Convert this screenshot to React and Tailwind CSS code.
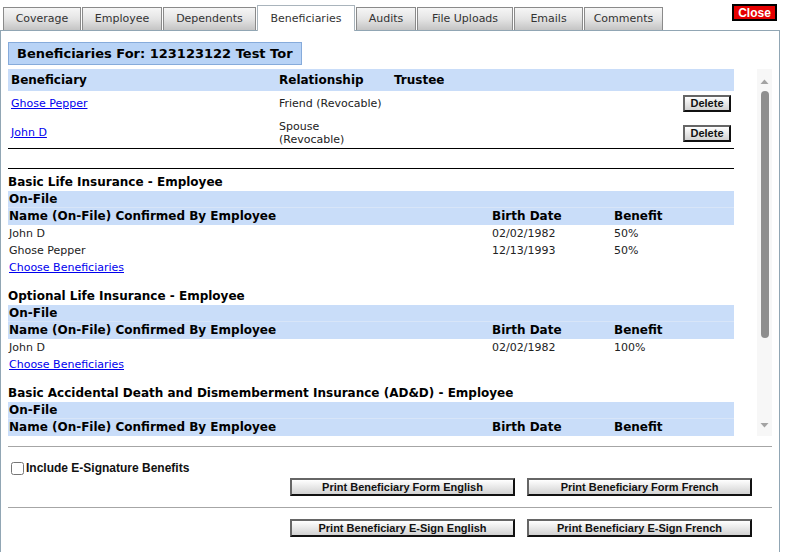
import React from 'react'

const tabs = [
  { label: 'Coverage', w: 'w-[78px]' },
  { label: 'Employee', w: 'w-[80px]' },
  { label: 'Dependents', w: 'w-[93px]' },
  { label: 'Beneficiaries', w: 'w-[98px]', active: true },
  { label: 'Audits', w: 'w-[60px]' },
  { label: 'File Uploads', w: 'w-[96px]' },
  { label: 'Emails', w: 'w-[69px]' },
  { label: 'Comments', w: 'w-[79px]' },
]

const sections = [
  {
    title: 'Basic Life Insurance - Employee',
    rows: [
      ['John D', '02/02/1982', '50%'],
      ['Ghose Pepper', '12/13/1993', '50%'],
    ],
  },
  {
    title: 'Optional Life Insurance - Employee',
    rows: [['John D', '02/02/1982', '100%']],
  },
  {
    title: 'Basic Accidental Death and Dismemberment Insurance (AD&D) - Employee',
    rows: [['John D', '02/02/1982', '100%']],
  },
]

function GrayButton({ children, className = '' }) {
  return (
    <button
      className={`border-2 border-t-[#666] border-l-[#666] border-r-[#111] border-b-[#111] bg-gradient-to-b from-white to-[#d2d2d2] font-['Liberation_Sans',Arial,sans-serif] text-[11px] font-bold leading-none text-[#111] ${className}`}
    >
      {children}
    </button>
  )
}

function Section({ section }) {
  return (
    <div className="mb-[11px]">
      <div className="h-[18px] text-[12px] font-bold leading-[18px] text-black">{section.title}</div>
      <div className="h-[17px] bg-[#c9ddf9] pl-[1px] text-[12px] font-bold leading-[17px] text-black border-b border-[#d8e5f8]">On-File</div>
      <div className="flex h-[17px] bg-[#c9ddf9] pl-[1px] text-[12px] font-bold leading-[17px] text-black">
        <div className="w-[483px]">Name (On-File) Confirmed By Employee</div>
        <div className="w-[122px]">Birth Date</div>
        <div>Benefit</div>
      </div>
      {section.rows.map((r) => (
        <div key={r[0]} className="flex h-[17px] pl-[1px] text-[11px] leading-[17px] text-[#222]">
          <div className="w-[483px]">{r[0]}</div>
          <div className="w-[122px]">{r[1]}</div>
          <div>{r[2]}</div>
        </div>
      ))}
      <a href="#" className="block h-[17px] pl-[1px] text-[11px] leading-[17px] text-[#0000ee] underline">
        Choose Beneficiaries
      </a>
    </div>
  )
}

export default function App() {
  return (
    <div className="h-[552px] w-[785px] overflow-hidden bg-white font-['DejaVu_Sans',Verdana,sans-serif]">
      {/* Tabs */}
      <div className="flex h-[31px] items-end pl-[3px] pr-[8px]">
        {tabs.map((t) =>
          t.active ? (
            <div
              key={t.label}
              className={`${t.w} relative z-10 mr-[1px] flex h-[26px] items-center justify-center border border-b-0 border-[#a9b4bc] bg-white pt-[1px] text-[11px] text-[#333]`}
            >
              {t.label}
            </div>
          ) : (
            <div
              key={t.label}
              className={`${t.w} mr-[1px] flex h-[24px] items-center justify-center border border-[#8a8a8a] bg-gradient-to-b from-[#f6f6f6] via-[#e4e4e4] to-[#c4c4c4] pt-[1px] text-[11px] text-[#333]`}
            >
              {t.label}
            </div>
          )
        )}
        <button className="mb-auto ml-auto mt-[4px] h-[17px] w-[45px] border-2 border-black bg-[#e60000] font-['Liberation_Sans',Arial,sans-serif] text-[12px] font-bold leading-none text-white">
          Close
        </button>
      </div>

      {/* Panel */}
      <div className="relative -mt-[1px] mr-[5px] h-[600px] border border-[#91a6b4] px-[7px] pt-[10px]">
        <div className="inline-block h-[23px] border border-[#86abdb] bg-[#b8d3f6] px-[8px] text-[13px] font-bold leading-[21px] text-black">
          Beneficiaries For: 123123122 Test Tor
        </div>

        <div className="mt-[4px] flex h-[367px]">
          {/* Scrollable content */}
          <div className="w-[749px] overflow-hidden">
            <div className="w-[726px]">
              <div className="flex h-[22px] items-center bg-[#c9ddf9] pb-[1px] text-[12px] font-bold text-black">
                <div className="w-[271px] pl-[3px]">Beneficiary</div>
                <div className="w-[115px]">Relationship</div>
                <div>Trustee</div>
              </div>
              <div className="flex h-[27px] items-center text-[11px]">
                <div className="w-[271px] pl-[3px]">
                  <a href="#" className="text-[#0000ee] underline">Ghose Pepper</a>
                </div>
                <div className="w-[130px] text-[#222]">Friend (Revocable)</div>
                <div className="flex-1" />
                <GrayButton className="mb-[3px] mr-[3px] h-[17px] w-[48px]">Delete</GrayButton>
              </div>
              <div className="flex h-[31px] items-center border-b border-black text-[11px]">
                <div className="w-[271px] pl-[3px]">
                  <a href="#" className="text-[#0000ee] underline">John D</a>
                </div>
                <div className="w-[80px] leading-[13px] text-[#222]">Spouse (Revocable)</div>
                <div className="flex-1" />
                <GrayButton className="mr-[3px] h-[17px] w-[48px]">Delete</GrayButton>
              </div>
              <div className="mt-[19px] border-t border-black pt-[4px]">
                {sections.map((s) => (
                  <Section key={s.title} section={s} />
                ))}
              </div>
            </div>
          </div>

          {/* Scrollbar */}
          <div className="flex w-[15px] flex-col items-center bg-[#f7f7f7]">
            <svg width="15" height="22" viewBox="0 0 15 22" className="shrink-0">
              <polygon points="3.5,15 11.5,15 7.5,10.5" fill="#a3a3a3" />
            </svg>
            <div className="h-[247px] w-[8px] rounded-[4px] bg-[#8e8e8e]" />
            <div className="flex-1" />
            <svg width="15" height="18" viewBox="0 0 15 18" className="shrink-0">
              <polygon points="3.5,5 11.5,5 7.5,9.5" fill="#a3a3a3" />
            </svg>
          </div>
        </div>

        {/* Footer */}
        <div className="mt-[10px] border-t border-[#a6a6a6] pt-[14px]">
          <label className="flex items-center gap-[2px] pl-[3px] font-['Liberation_Sans',Arial,sans-serif] text-[12px] font-bold leading-[14px] text-[#111]">
            <input type="checkbox" className="m-0 h-[13px] w-[13px]" />
            Include E-Signature Benefits
          </label>
          <div className="mt-[3px] flex justify-end gap-[12px] pr-[20px]">
            <GrayButton className="h-[18px] w-[225px]">Print Beneficiary Form English</GrayButton>
            <GrayButton className="h-[18px] w-[225px]">Print Beneficiary Form French</GrayButton>
          </div>
          <div className="mt-[11px] border-t border-[#a6a6a6] pt-[11px]">
            <div className="flex justify-end gap-[12px] pr-[20px]">
              <GrayButton className="h-[18px] w-[225px]">Print Beneficiary E-Sign English</GrayButton>
              <GrayButton className="h-[18px] w-[225px]">Print Beneficiary E-Sign French</GrayButton>
            </div>
          </div>
        </div>
      </div>
    </div>
  )
}
